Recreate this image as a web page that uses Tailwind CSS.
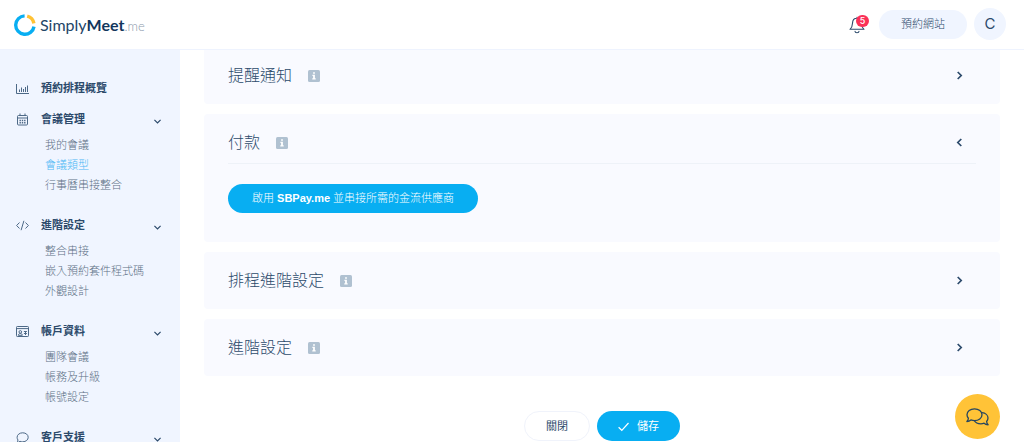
<!DOCTYPE html>
<html lang="zh-Hant">
<head>
    <meta charset="UTF-8">
    <meta name="viewport" content="width=device-width, initial-scale=1.0">
    <title>SimplyMeet.me</title>
    <script src="https://cdn.jsdelivr.net/npm/@tailwindcss/browser@4"></script>
</head>
<body class="flex h-screen flex-col overflow-hidden bg-white font-['Liberation_Sans','Noto_Sans_CJK_TC',sans-serif] text-[11px] text-[#2c4a6b]">
    <!-- Top bar -->
    <header class="flex h-[50px] shrink-0 items-center justify-between border-b border-[#eef3fe] pr-[18px] pl-[14px]">
        <a href="#" class="flex items-center gap-1" aria-label="SimplyMeet.me">
            <svg class="size-[22px]" viewBox="0 0 22 22" fill="none" stroke-width="3.4">
                <path d="M10.6 1.9A9.2 9.2 0 1 0 20 12.6" stroke="#08aef2"/>
                <path d="M13.2 2.1A9.2 9.2 0 0 1 19.9 9.4" stroke="#ffc235"/>
            </svg>
            <span class="pt-px font-['Lato',sans-serif] text-[16px] leading-6 text-[#234567]">Simply<b class="font-bold text-[#12365c]">Meet</b><span class="text-[13px] font-light text-[#8d9bad]">.me</span></span>
        </a>
        <div class="flex items-center">
            <button class="relative mr-3 h-[18px] w-[18px]" aria-label="通知">
                <svg class="size-[18px]" viewBox="0 0 18 18" fill="none" stroke="#2c4a6b" stroke-width="1.1" stroke-linejoin="round" stroke-linecap="round">
                    <path d="M8 2.2V1.2M8 2.3C5 2.3 3.6 4.7 3.5 7.2 3.4 10.4 2.9 11.6 1 13.3h14c-1.9-1.7-2.4-2.9-2.5-6.1C12.400 4.700 11 2.300 8 2.300zM6 15.200a2 1.600 0 0 0 4 0"/>
                </svg>
                <span class="absolute -top-px left-[7px] flex h-3 w-[13px] items-center justify-center rounded-full bg-[#fb3158] font-['Inter',sans-serif] text-[9px] font-medium text-white">5</span>
            </button>
            <button class="mr-[7px] h-[29px] rounded-full bg-[#f0f5ff] px-[22px] font-light">預約網站</button>
            <button class="mb-px size-8 rounded-full bg-[#f0f5ff] font-['Inter',sans-serif] text-[15px]">C</button>
        </div>
    </header>

    <div class="flex min-h-0 flex-1">
        <!-- Sidebar -->
        <nav class="w-[180px] shrink-0 overflow-hidden bg-[#f0f5ff] pt-[23px] pr-[19px] pl-4">
            <a href="#" class="flex h-[31px] items-center font-bold">
                <svg class="mr-3 size-[13px]" viewBox="0 0 13 13" fill="none" stroke="#4d6987" stroke-width="1">
                    <path d="M.5 2v9.500H13M3.500 10V7.500M5.500 10V5.500M7.500 10V7M9.500 10V5M11.500 10V3.500"/>
                </svg>
                預約排程概覽
            </a>

            <section class="mb-[15px]">
                <button class="flex h-[31px] w-full items-center font-bold">
                    <svg class="mr-3 size-[13px]" viewBox="0 0 13 13" fill="none" stroke="#4d6987">
                        <rect x="1.500" y="2.500" width="10" height="9.500" rx="1"/>
                        <path d="M1.500 5h10M4 .5v2M9 .5v2"/>
                        <path d="M3.500 7.500h6M3.500 9.700h6" stroke-width="1.400" stroke-dasharray="1.400 .9"/>
                    </svg>
                    會議管理
                    <svg class="mt-1 ml-auto size-[7px]" viewBox="0 0 7 7" fill="none" stroke="#2c4a6b" stroke-width="1.200"><path d="M.4 1.800 3.500 5l3.100-3.200"/></svg>
                </button>
                <ul class="pl-[29px] leading-5 font-light text-[#5d7085]">
                    <li><a href="#">我的會議</a></li>
                    <li><a href="#" class="text-[#4db8f5]">會議類型</a></li>
                    <li><a href="#">行事曆串接整合</a></li>
                </ul>
            </section>

            <section class="mb-[15px]">
                <button class="flex h-[31px] w-full items-center font-bold">
                    <svg class="mr-3 size-[13px]" viewBox="0 0 13 13" fill="none" stroke="#4d6987">
                        <path d="M3.500 3.500.6 6.500l2.900 3M9.500 3.500l2.900 3-2.900 3M7.900 1.800 5.100 11.200"/>
                    </svg>
                    進階設定
                    <svg class="mt-1 ml-auto size-[7px]" viewBox="0 0 7 7" fill="none" stroke="#2c4a6b" stroke-width="1.200"><path d="M.4 1.800 3.500 5l3.100-3.200"/></svg>
                </button>
                <ul class="pl-[29px] leading-5 font-light text-[#5d7085]">
                    <li><a href="#">整合串接</a></li>
                    <li><a href="#">嵌入預約套件程式碼</a></li>
                    <li><a href="#">外觀設計</a></li>
                </ul>
            </section>

            <section class="mb-[15px]">
                <button class="flex h-[31px] w-full items-center font-bold">
                    <svg class="mr-3 size-[13px]" viewBox="0 0 13 13" fill="none" stroke="#4d6987">
                        <rect x=".5" y="1.500" width="12" height="10" rx=".8"/>
                        <path d="M.5 3.600h12M7.900 6.500h3M7.900 8.500h3M9.500 6v4M2.300 10.300c0-2.400 4-2.400 4 0z"/>
                        <circle cx="4.300" cy="6.900" r="1.300"/>
                    </svg>
                    帳戶資料
                    <svg class="mt-1 ml-auto size-[7px]" viewBox="0 0 7 7" fill="none" stroke="#2c4a6b" stroke-width="1.200"><path d="M.4 1.800 3.500 5l3.100-3.200"/></svg>
                </button>
                <ul class="pl-[29px] leading-5 font-light text-[#5d7085]">
                    <li><a href="#">團隊會議</a></li>
                    <li><a href="#">帳務及升級</a></li>
                    <li><a href="#">帳號設定</a></li>
                </ul>
            </section>

            <section>
                <button class="flex h-[31px] w-full items-center font-bold">
                    <svg class="mr-3 size-[13px]" viewBox="0 0 13 13" fill="none" stroke="#4d6987">
                        <path d="M6.700 1.800c3.200 0 5.500 2 5.500 4.500s-2.300 4.500-5.500 4.500c-1 0-1.900-.2-2.700-.5-.8.700-1.900 1.100-3.200 1.200.6-.7 1.100-1.500 1.200-2.500C1.400 8.200 1.100 7.300 1.100 6.300c0-2.500 2.400-4.500 5.600-4.500z"/>
                    </svg>
                    客戶支援
                    <svg class="mt-1 ml-auto size-[7px]" viewBox="0 0 7 7" fill="none" stroke="#2c4a6b" stroke-width="1.200"><path d="M.4 1.800 3.500 5l3.100-3.200"/></svg>
                </button>
            </section>
        </nav>

        <!-- Settings panels -->
        <main class="flex min-w-0 flex-1 flex-col gap-[10px] px-6">
            <section class="rounded-b-[4px] bg-[#f9faff] px-6 pb-[3px]">
                <button class="flex h-[51px] w-full items-center text-[16px] font-light">
                    提醒通知
                    <svg class="mt-px ml-4 size-3" viewBox="0 0 12 12"><rect width="12" height="12" rx="1.500" fill="#b0c1d1"/><path d="M5.100 2.200h1.800v1.600H5.100zM4.400 4.700h2.500v3.600h.8v1.200H4.300V8.300h.8V5.900h-.7z" fill="#fff"/></svg>
                    <svg class="mr-3 ml-auto size-[9px]" viewBox="0 0 9 9" fill="none" stroke="#2c4a6b" stroke-width="1.700"><path d="M2.700 1 6.200 4.500 2.700 8"/></svg>
                </button>
            </section>

            <section class="rounded-[4px] bg-[#f9faff] px-6 pb-[29px]">
                <button class="mb-5 flex h-[50px] w-full items-center border-b border-[#eef2f8] pt-2 text-[16px] font-light">
                    付款
                    <svg class="mt-px ml-4 size-3" viewBox="0 0 12 12"><rect width="12" height="12" rx="1.500" fill="#b0c1d1"/><path d="M5.100 2.200h1.800v1.600H5.100zM4.400 4.700h2.500v3.600h.8v1.200H4.300V8.300h.8V5.900h-.7z" fill="#fff"/></svg>
                    <svg class="mr-3 ml-auto size-[9px]" viewBox="0 0 9 9" fill="none" stroke="#2c4a6b" stroke-width="1.700"><path d="M6.300 1 2.800 4.500 6.300 8"/></svg>
                </button>
                <button class="block h-[29px] rounded-full bg-[#08aef2] px-6 font-light text-white">啟用 <b class="font-bold">SBPay.me</b> 並串接所需的金流供應商</button>
            </section>

            <section class="rounded-[4px] bg-[#f9faff] px-6">
                <button class="flex h-[57px] w-full items-center text-[16px] font-light">
                    排程進階設定
                    <svg class="mt-px ml-4 size-3" viewBox="0 0 12 12"><rect width="12" height="12" rx="1.500" fill="#b0c1d1"/><path d="M5.100 2.200h1.800v1.600H5.100zM4.400 4.700h2.500v3.600h.8v1.200H4.300V8.300h.8V5.900h-.7z" fill="#fff"/></svg>
                    <svg class="mr-3 ml-auto size-[9px]" viewBox="0 0 9 9" fill="none" stroke="#2c4a6b" stroke-width="1.700"><path d="M2.700 1 6.200 4.500 2.700 8"/></svg>
                </button>
            </section>

            <section class="rounded-[4px] bg-[#f9faff] px-6">
                <button class="flex h-[57px] w-full items-center text-[16px] font-light">
                    進階設定
                    <svg class="mt-px ml-4 size-3" viewBox="0 0 12 12"><rect width="12" height="12" rx="1.500" fill="#b0c1d1"/><path d="M5.100 2.200h1.800v1.600H5.100zM4.400 4.700h2.500v3.600h.8v1.200H4.300V8.300h.8V5.900h-.7z" fill="#fff"/></svg>
                    <svg class="mr-3 ml-auto size-[9px]" viewBox="0 0 9 9" fill="none" stroke="#2c4a6b" stroke-width="1.700"><path d="M2.700 1 6.200 4.500 2.700 8"/></svg>
                </button>
            </section>

            <div class="flex justify-center gap-[7px] pt-[25px]">
                <button class="h-[30px] rounded-full border border-[#f0f3fb] px-[21px]">關閉</button>
                <button class="flex h-[30px] items-center gap-2 rounded-full bg-[#08aef2] px-[21px] text-white">
                    <svg class="size-[11px]" viewBox="0 0 11 11" fill="none" stroke="#fff" stroke-width="1.200"><path d="M.6 6.300 3.800 9.300 10.500 2"/></svg>
                    儲存
                </button>
            </div>
        </main>
    </div>

    <!-- Live chat -->
    <button class="fixed right-6 bottom-[3px] flex size-[45px] items-center justify-center rounded-full bg-[#ffc337]" aria-label="聊天">
        <svg class="h-[18px] w-[23px]" viewBox="0 0 23 18" fill="none" stroke="#27465f" stroke-width="1.300" stroke-linejoin="round">
            <path d="M8.500.8c4.200 0 7.500 2.500 7.500 5.900s-3.300 5.900-7.500 5.900c-1.300 0-2.500-.3-3.600-.7-1 .9-2.400 1.500-4 1.600.8-.9 1.400-2 1.500-3.300C1.500 9.200 1 8 1 6.700 1 3.300 4.300.8 8.500.8z"/>
            <path d="M16 4.600c3.400.3 6 2.600 6 5.400 0 1.300-.5 2.500-1.400 3.500.1 1.300.7 2.400 1.500 3.300-1.600-.1-3-.7-4-1.600-1 .4-2 .6-3.200.6-3 0-5.600-1.300-6.700-3.300"/>
        </svg>
    </button>
</body>
</html>
